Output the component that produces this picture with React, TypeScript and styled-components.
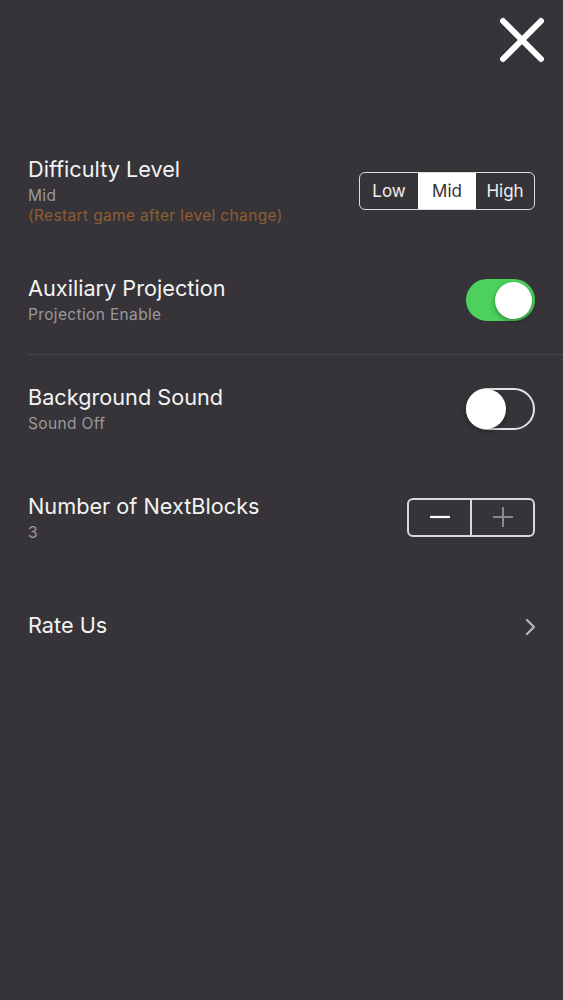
import React, { useState } from "react";
import styled, { createGlobalStyle } from "styled-components";

const GlobalStyle = createGlobalStyle`
  html, body {
    margin: 0;
    padding: 0;
    background: #363438;
  }
  body {
    font-family: "Inter", "Liberation Sans", sans-serif;
    -webkit-font-smoothing: antialiased;
  }
`;

const Page = styled.div`
  width: 563px;
  min-height: 1000px;
  background: #363438;
  display: flex;
  flex-direction: column;
`;

const Header = styled.header`
  height: 137px;
  display: flex;
  justify-content: flex-end;
  align-items: flex-start;
  padding: 17px 18px 0 0;
  box-sizing: border-box;
`;

const CloseButton = styled.button`
  width: 46px;
  height: 46px;
  padding: 0;
  border: none;
  background: transparent;
  cursor: pointer;
  display: flex;
`;

const Row = styled.div<{ $divider?: boolean }>`
  height: 109px;
  box-sizing: border-box;
  margin-left: 28px;
  padding-right: 28px;
  display: flex;
  align-items: center;
  justify-content: space-between;
  border-bottom: 1px solid ${(p) => (p.$divider ? "#48464b" : "transparent")};
`;

const Labels = styled.div`
  display: flex;
  flex-direction: column;
`;

const Title = styled.div`
  color: #f3f3f3;
  font-size: 21.7px;
  line-height: 26px;
  margin-bottom: 4px;
`;

const Subtitle = styled.div<{ $warn?: boolean }>`
  color: ${(p) => (p.$warn ? "#8e5d33" : "#9a999c")};
  font-size: 15.5px;
  letter-spacing: 0.35px;
  line-height: 20px;
`;

const Segmented = styled.div`
  display: flex;
  height: 38px;
  border: 1.5px solid #dcdcdc;
  border-radius: 6px;
  overflow: hidden;
  box-sizing: border-box;
`;

const Segment = styled.button<{ $active?: boolean }>`
  width: 58px;
  border: none;
  padding: 0;
  font-family: inherit;
  font-size: 17px;
  background: ${(p) => (p.$active ? "#ffffff" : "transparent")};
  color: ${(p) => (p.$active ? "#333236" : "#f0f0f0")};
  cursor: pointer;
`;

const Track = styled.button<{ $on: boolean }>`
  width: 69px;
  height: 42px;
  border-radius: 21px;
  padding: 0;
  box-sizing: border-box;
  border: 2px solid ${(p) => (p.$on ? "#4bd15c" : "#e4e4e4")};
  background: ${(p) => (p.$on ? "#4bd15c" : "transparent")};
  display: flex;
  align-items: center;
  justify-content: ${(p) => (p.$on ? "flex-end" : "flex-start")};
  cursor: pointer;
`;

const Knob = styled.span<{ $on: boolean }>`
  width: ${(p) => (p.$on ? 37 : 40)}px;
  height: ${(p) => (p.$on ? 37 : 40)}px;
  margin: ${(p) => (p.$on ? "0 1px 0 0" : "0 0 0 -2px")};
  border-radius: 50%;
  background: #ffffff;
  box-shadow: 0 2px 5px rgba(0, 0, 0, 0.35);
`;

const Stepper = styled.div`
  display: flex;
  width: 128px;
  height: 39px;
  margin-top: -2px;
  border: 2px solid #d8d8d8;
  border-radius: 6px;
  box-sizing: border-box;
`;

const StepButton = styled.button<{ $first?: boolean }>`
  flex: 1;
  border: none;
  border-right: ${(p) => (p.$first ? "2px solid #d8d8d8" : "none")};
  background: transparent;
  padding: 0;
  display: flex;
  align-items: center;
  justify-content: center;
  cursor: pointer;
`;

const Chevron = styled.svg`
  display: block;
  margin-right: -1px;
`;

function Toggle({ on, onChange }: { on: boolean; onChange: () => void }) {
  return (
    <Track $on={on} onClick={onChange} aria-pressed={on}>
      <Knob $on={on} />
    </Track>
  );
}

export default function App() {
  const [level, setLevel] = useState("Mid");
  const [projection, setProjection] = useState(true);
  const [sound, setSound] = useState(false);
  const [count, setCount] = useState(3);

  return (
    <>
      <GlobalStyle />
      <Page>
        <Header>
          <CloseButton aria-label="Close">
            <svg width="46" height="46" viewBox="0 0 46 46">
              <path
                d="M4 4 L42 42 M42 4 L4 42"
                stroke="#ffffff"
                strokeWidth="6"
                strokeLinecap="round"
                fill="none"
              />
            </svg>
          </CloseButton>
        </Header>

        <Row>
          <Labels>
            <Title>Difficulty Level</Title>
            <Subtitle>{level}</Subtitle>
            <Subtitle $warn>(Restart game after level change)</Subtitle>
          </Labels>
          <Segmented>
            {["Low", "Mid", "High"].map((l) => (
              <Segment key={l} $active={level === l} onClick={() => setLevel(l)}>
                {l}
              </Segment>
            ))}
          </Segmented>
        </Row>

        <Row $divider>
          <Labels>
            <Title>Auxiliary Projection</Title>
            <Subtitle>{projection ? "Projection Enable" : "Projection Disable"}</Subtitle>
          </Labels>
          <Toggle on={projection} onChange={() => setProjection(!projection)} />
        </Row>

        <Row>
          <Labels>
            <Title>Background Sound</Title>
            <Subtitle>{sound ? "Sound On" : "Sound Off"}</Subtitle>
          </Labels>
          <Toggle on={sound} onChange={() => setSound(!sound)} />
        </Row>

        <Row>
          <Labels>
            <Title>Number of NextBlocks</Title>
            <Subtitle>{count}</Subtitle>
          </Labels>
          <Stepper>
            <StepButton $first aria-label="Decrease" onClick={() => setCount(Math.max(1, count - 1))}>
              <svg width="22" height="4" viewBox="0 0 22 4">
                <path d="M1 2 H21" stroke="#ffffff" strokeWidth="2.2" />
              </svg>
            </StepButton>
            <StepButton aria-label="Increase" onClick={() => setCount(count + 1)}>
              <svg width="22" height="22" viewBox="0 0 22 22">
                <path d="M1 11 H21 M11 1 V21" stroke="#8a898c" strokeWidth="2" />
              </svg>
            </StepButton>
          </Stepper>
        </Row>

        <Row>
          <Labels>
            <Title>Rate Us</Title>
          </Labels>
          <Chevron width="11" height="18" viewBox="0 0 11 18">
            <path
              d="M2 2 L9 9 L2 16"
              stroke="#b4b3b6"
              strokeWidth="2.4"
              fill="none"
              strokeLinecap="round"
              strokeLinejoin="round"
            />
          </Chevron>
        </Row>
      </Page>
    </>
  );
}
